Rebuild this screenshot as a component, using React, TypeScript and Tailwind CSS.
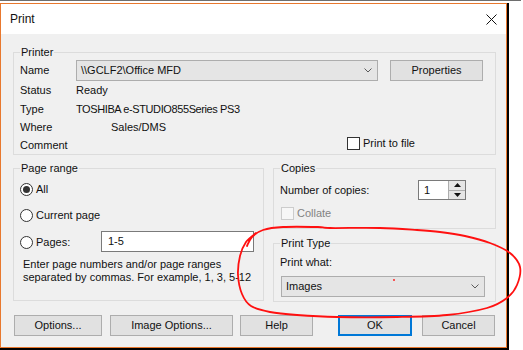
import React from 'react';

const font = { fontFamily: '"Liberation Sans", Arial, sans-serif' };

// hand-drawn red annotation loop around the Print Type box
const loop: [number, number][] = [
  [247, 246], [252, 237], [263, 230], [283, 227], [318, 227], [330, 228], [380, 228], [417, 230],
  [440, 232], [465, 236], [490, 243], [510, 253], [520, 267], [517, 285], [507, 298],
  [487, 308], [447, 315], [397, 317], [337, 317], [297, 315], [270, 312], [251, 306],
  [242, 294], [238, 275], [240, 256], [246, 242], [256, 233],
];

function smooth(p: [number, number][]) {
  let d = `M${p[0][0]},${p[0][1]}`;
  for (let i = 0; i < p.length - 1; i++) {
    const p0 = p[i - 1] ?? p[i];
    const p1 = p[i];
    const p2 = p[i + 1];
    const p3 = p[i + 2] ?? p2;
    const c1 = [p1[0] + (p2[0] - p0[0]) / 6, p1[1] + (p2[1] - p0[1]) / 6];
    const c2 = [p2[0] - (p3[0] - p1[0]) / 6, p2[1] - (p3[1] - p1[1]) / 6];
    d += ` C${c1[0]},${c1[1]} ${c2[0]},${c2[1]} ${p2[0]},${p2[1]}`;
  }
  return d;
}

function Chevron() {
  return (
    <svg width="8" height="5" viewBox="0 0 8 5" className="shrink-0">
      <path d="M0.5 0.5 L4 4 L7.5 0.5" stroke="#5a5a5a" strokeWidth="1" fill="none" />
    </svg>
  );
}

function Combo({ value, className }: { value: string; className: string }) {
  return (
    <div className={`flex items-center justify-between h-[21px] bg-[#e5e5e5] border border-[#adadad] pl-[4px] pr-[5px] ${className}`}>
      <span>{value}</span>
      <Chevron />
    </div>
  );
}

function Btn({ label, className, primary }: { label: string; className: string; primary?: boolean }) {
  return (
    <div
      className={`flex items-center justify-center h-[21px] bg-[#e1e1e1] ${
        primary ? 'border-2 border-[#0078d7]' : 'border border-[#adadad]'
      } ${className}`}
    >
      {label}
    </div>
  );
}

function Radio({ checked }: { checked?: boolean }) {
  return (
    <span className="w-[13px] h-[13px] rounded-full border border-[#333] bg-white flex items-center justify-center shrink-0">
      {checked && <span className="w-[7px] h-[7px] rounded-full bg-[#333]" />}
    </span>
  );
}

function Group({ title, className, children }: { title: string; className: string; children: React.ReactNode }) {
  return (
    <fieldset className={`border border-[#dcdcdc] px-[6px] min-w-0 ${className}`}>
      <legend className="px-[1px] leading-[14px]">{title}</legend>
      {children}
    </fieldset>
  );
}

export default function App() {
  return (
    <div className="relative w-[523px] h-[350px] bg-white overflow-hidden text-[11px] text-[#111]" style={font}>
      <div className="h-[3px] border-t border-[#6e6e6e] w-[521px]" />
      <div className="w-[509px] border-r-2 border-b-2 border-black">
        <div className="h-[345px] border border-[#e8782e] flex flex-col">
          <div className="h-[30px] bg-white flex items-center justify-between pl-[9px] pr-[9px]">
            <span className="text-[12px]">Print</span>
            <svg width="11" height="11" viewBox="0 0 11 11">
              <path d="M0.5 0.5 L10.5 10.5 M10.5 0.5 L0.5 10.5" stroke="#111" strokeWidth="1" />
            </svg>
          </div>

          <div className="flex-1 bg-[#f0f0f0] pl-[12px] pr-[10px] flex flex-col">
            <Group title="Printer" className="mt-[11px] w-[483px]">
              <div className="mt-[1px] h-[21px] flex items-center">
                <span className="w-[56px]">Name</span>
                <Combo value="\\GCLF2\Office MFD" className="w-[302px]" />
                <Btn label="Properties" className="ml-[12px] w-[93px] h-[20px]" />
              </div>
              <div className="h-[19px] flex items-center">
                <span className="w-[56px]">Status</span>
                <span>Ready</span>
              </div>
              <div className="h-[18px] flex items-center">
                <span className="w-[56px]">Type</span>
                <span className="tracking-[-0.4px]">TOSHIBA e-STUDIO855Series PS3</span>
              </div>
              <div className="h-[18px] flex items-center">
                <span className="w-[91px]">Where</span>
                <span>Sales/DMS</span>
              </div>
              <div className="h-[18px] flex items-center">
                <span className="w-[327px]">Comment</span>
                <span className="flex items-center gap-[3px] mb-[3px]">
                  <span className="w-[13px] h-[13px] border border-[#333] bg-white" />
                  <span>Print to file</span>
                </span>
              </div>
            </Group>

            <div className="mt-[6px] flex gap-[9px]">
              <Group title="Page range" className="w-[251px] h-[140px]">
                <div className="mt-[1px] h-[26px] flex items-center gap-[3px]">
                  <Radio checked />
                  <span>All</span>
                </div>
                <div className="h-[26px] flex items-center gap-[3px]">
                  <Radio />
                  <span>Current page</span>
                </div>
                <div className="mt-[3px] h-[21px] flex items-center">
                  <span className="flex items-center gap-[3px] w-[81px] mt-[2px]">
                    <Radio />
                    <span>Pages:</span>
                  </span>
                  <div className="w-[153px] h-[21px] bg-white border border-[#7a7a7a] flex items-center pl-[6px]">1-5</div>
                </div>
                <div className="mt-[6px] ml-[3px] leading-[13px]">
                  Enter page numbers and/or page ranges
                  <br />
                  separated by commas. For example, 1, 3, 5-12
                </div>
              </Group>

              <div className="w-[223px] flex flex-col">
                <Group title="Copies" className="h-[68px]">
                  <div className="mt-[5px] h-[20px] flex items-center">
                    <span className="w-[138px]">Number of copies:</span>
                    <div className="w-[48px] h-[20px] border border-[#7a7a7a] bg-white flex">
                      <span className="flex-1 flex items-center pl-[5px]">1</span>
                      <div className="w-[17px] flex flex-col border-l border-[#adadad] bg-[#e5e5e5]">
                        <div className="flex-1 flex items-center justify-center border-b border-[#adadad]">
                          <svg width="7" height="4" viewBox="0 0 7 4">
                            <path d="M0 4 L3.5 0 L7 4 Z" fill="#111" />
                          </svg>
                        </div>
                        <div className="flex-1 flex items-center justify-center">
                          <svg width="7" height="4" viewBox="0 0 7 4">
                            <path d="M0 0 L3.5 4 L7 0 Z" fill="#111" />
                          </svg>
                        </div>
                      </div>
                    </div>
                  </div>
                  <div className="mt-[4px] h-[18px] flex items-center gap-[3px] text-[#838383]">
                    <span className="ml-[1px] w-[13px] h-[13px] border border-[#cccccc] bg-[#f7f7f7]" />
                    <span>Collate</span>
                  </div>
                </Group>

                <Group title="Print Type" className="mt-[7px] h-[66px]">
                  <div className="mt-[3px] h-[18px] flex items-center">Print what:</div>
                  <Combo value="Images" className="mt-[5px] ml-[1px] w-[204px]" />
                </Group>
              </div>
            </div>

            <div className="mt-[13px] flex">
              <Btn label="Options..." className="ml-[1px] w-[88px]" />
              <Btn label="Image Options..." className="ml-[8px] w-[123px]" />
              <Btn label="Help" className="ml-[7px] w-[73px]" />
              <Btn label="OK" primary className="ml-[25px] w-[74px]" />
              <Btn label="Cancel" className="ml-[10px] w-[73px]" />
            </div>
          </div>
        </div>
      </div>

      <svg className="absolute inset-0 pointer-events-none" width="523" height="350">
        <path d={smooth(loop)} stroke="#ff1010" strokeWidth="1.8" fill="none" strokeLinecap="round" />
        <circle cx="394" cy="280" r="0.9" fill="#ff1010" />
      </svg>
    </div>
  );
}
